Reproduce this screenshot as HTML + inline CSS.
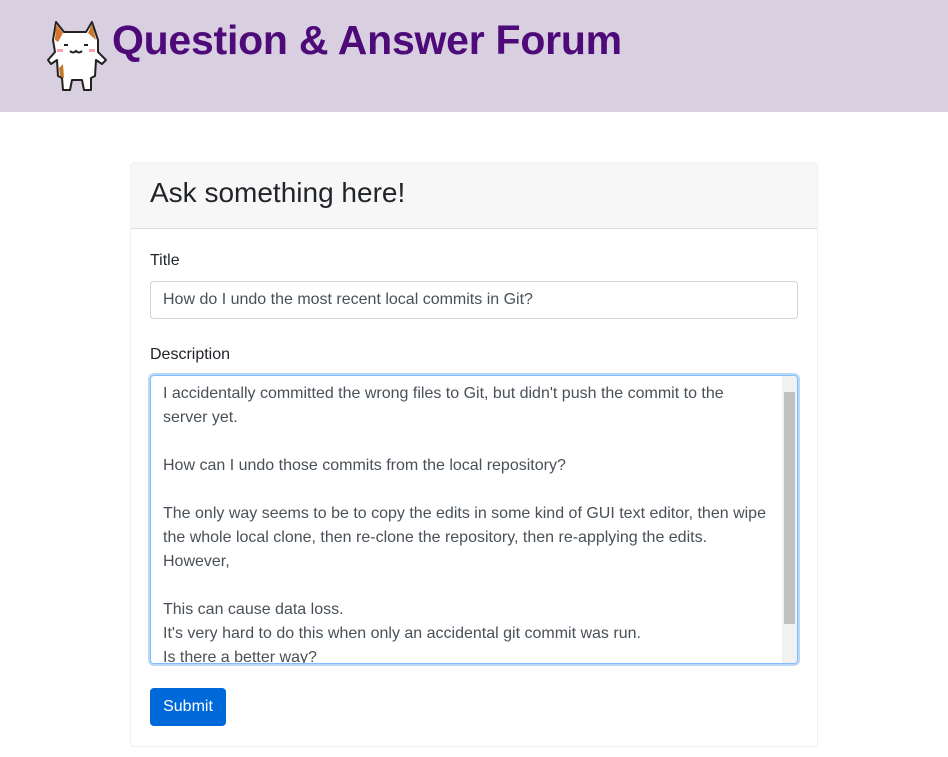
<!DOCTYPE html>
<html><head><style>
body{margin:0;width:948px;height:757px;background:#fff;font-family:"Liberation Sans",sans-serif;overflow:hidden;position:relative;color:#212529}
.hdr{position:absolute;left:0;top:0;width:948px;height:112px;background:#d8cfe0}
.hdr h1{position:absolute;left:112px;top:17px;margin:0;font-size:41px;font-weight:bold;color:#4e0a78;letter-spacing:-0.25px}
.card{position:absolute;left:130px;top:162px;width:686px;height:583px;border:1px solid #f0f0f0;border-radius:4px}
.ch{height:65px;background:#f7f7f7;border-bottom:1px solid #ddd;font-size:28px;padding-left:19px;line-height:60px}
.lbl{position:absolute;left:19px;font-size:16px}
.inp{position:absolute;left:19px;top:118px;height:38px;border:1px solid #ced4da;border-radius:4px;font-size:16px;line-height:36px;padding-left:12px;box-sizing:border-box;width:648px;color:#495057}
.ta{position:absolute;left:19px;top:212px;width:648px;height:289px;border:1px solid #80bdff;box-shadow:0 0 0 2px #bcd8f7;border-radius:4px;box-sizing:border-box;overflow:hidden;color:#495057}
.ta .t{position:absolute;left:12px;top:6px;width:605px;font-size:16px;line-height:24px}
.sb{position:absolute;right:0;top:0;width:15px;height:100%;background:#f1f1f1}
.th{position:absolute;left:2px;top:16px;width:11px;height:232px;background:#c1c1c1}
.btn{position:absolute;left:19px;top:525px;width:76px;height:38px;background:#0069d9;color:#fff;border-radius:4px;font-size:16px;line-height:38px;text-align:center}
</style></head><body>
<div class="hdr">
<svg style="position:absolute;left:46px;top:18px" width="62" height="75" viewBox="0 0 62 75">
<path d="M10 4 L18 14 H40 L46 4 L52 22 L52 34 L60 42 L56 46 L50 42 L49 58 L45 60 L45 72 L38 72 L36 62 L26 62 L24 72 L17 72 L16 60 L12 58 L11 42 L5 46 L2 42 L9 34 L7 22 Z" fill="#fff" stroke="#222" stroke-width="2" stroke-linejoin="round"/>
<path d="M10 6 L17 15 L12 24 L9 22 Z" fill="#d7752d"/><path d="M46 6 L42 15 L50 22 Z" fill="#c9782e"/>
<path d="M13 50 L17 46 L18 60 L14 58 Z" fill="#c8782e"/>
<rect x="11" y="31" width="6" height="3" fill="#f4a6b0"/><rect x="43" y="31" width="6" height="3" fill="#f4a6b0"/>
<path d="M18 27 h4 M38 27 h4 M24 33 q3 3 6 0 q3 3 6 0" stroke="#222" stroke-width="2" fill="none"/>
</svg>
<h1>Question &amp; Answer Forum</h1>
</div>
<div class="card">
<div class="ch">Ask something here!</div>
<div class="lbl" style="top:89px">Title</div>
<div class="inp">How do I undo the most recent local commits in Git?</div>
<div class="lbl" style="top:183px">Description</div>
<div class="ta"><div class="t">I accidentally committed the wrong files to Git, but didn't push the commit to the<br>server yet.<br><br>How can I undo those commits from the local repository?<br><br>The only way seems to be to copy the edits in some kind of GUI text editor, then wipe the whole local clone, then re-clone the repository, then re-applying the edits. However,<br><br>This can cause data loss.<br>It's very hard to do this when only an accidental git commit was run.<br>Is there a better way?</div><div class="sb"><div class="th"></div></div></div>
<div class="btn">Submit</div>
</div>
</body></html>
